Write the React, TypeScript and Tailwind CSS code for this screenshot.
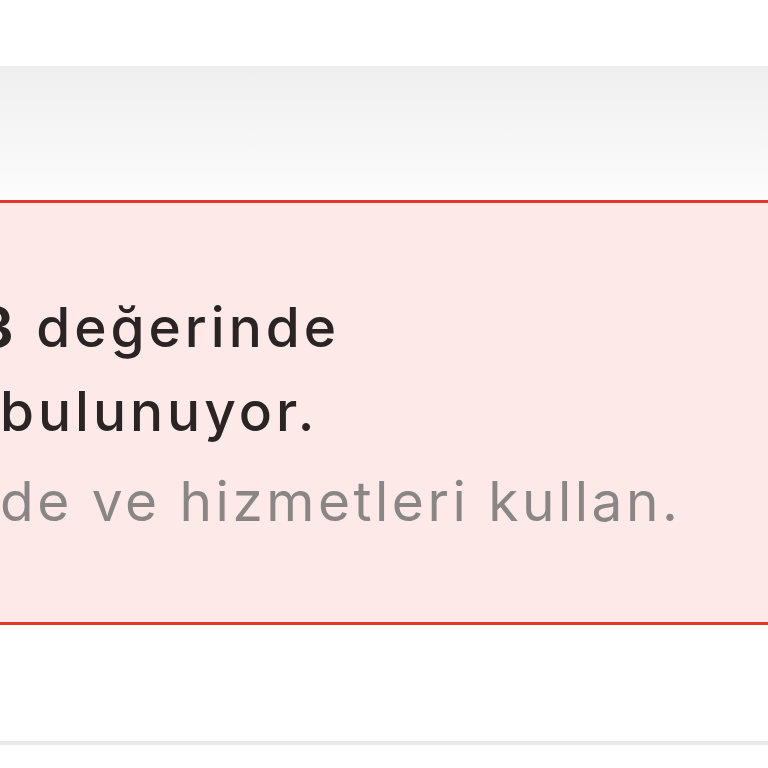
export default function App() {
  return (
    <div className="w-[768px] h-[768px] overflow-hidden bg-white" style={{ fontFamily: "Inter, 'Noto Sans', sans-serif" }}>
      {/* top spacer */}
      <div className="h-[66px] bg-white" />

      {/* grey header strip */}
      <div className="h-[134px] bg-gradient-to-b from-[#efefef] to-[#fcfcfc]" />

      {/* alert box */}
      <div className="h-[425px] border-y-[3px] border-[#e2372a] bg-[#fde9e8] pt-[82px] overflow-hidden">
        <div className="text-[55px] leading-[84px] font-medium tracking-[4px] text-[#2a2424] whitespace-nowrap">
          <div className="-ml-[22px]">
            <span className="font-bold">3</span> değerinde
          </div>
          <div>bulunuyor.</div>
        </div>
        <div className="text-[55px] leading-[96px] font-normal tracking-[3.5px] text-[#8b8686] whitespace-nowrap">
          de ve hizmetleri kullan.
        </div>
      </div>

      {/* white gap */}
      <div className="h-[116px] bg-white" />
      <div className="h-[4px] bg-[#e9e9e9]" />
      <div className="flex-1 bg-white" />
    </div>
  );
}
